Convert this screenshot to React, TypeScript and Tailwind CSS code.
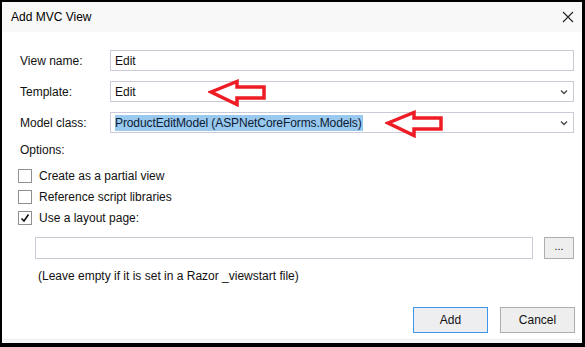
import React from "react";

const font = { fontFamily: '"Liberation Sans", Arial, sans-serif' };

function Arrow({ className }: { className: string }) {
  return (
    <svg className={className} width="60" height="28" viewBox="0 0 60 28">
      <polygon
        points="3,13 29,2.5 29,8 56,8 56,19 29,19 29,25.5"
        fill="none"
        stroke="#ee1c25"
        strokeWidth="3.5"
        strokeLinejoin="miter"
      />
    </svg>
  );
}

function Chevron() {
  return (
    <svg width="8" height="6" viewBox="0 0 8 6" className="shrink-0">
      <path d="M1 1.5 L4 4.5 L7 1.5" fill="none" stroke="#4a4a4a" strokeWidth="1.4" />
    </svg>
  );
}

function Checkbox({ checked }: { checked?: boolean }) {
  return (
    <div className="w-[14px] h-[14px] border border-[#8f8f8f] bg-white flex items-center justify-center shrink-0">
      {checked && (
        <svg width="10" height="10" viewBox="0 0 10 10">
          <path d="M1.5 5.5 L4 8 L8.5 1.5" fill="none" stroke="#111" strokeWidth="1.6" />
        </svg>
      )}
    </div>
  );
}

export default function App() {
  return (
    <div
      className="w-[585px] h-[347px] bg-black pt-[2px] pl-[2px] pr-[3px] pb-[4px] text-[12px] text-[#111111]"
      style={font}
    >
      <div className="w-full h-full bg-white flex flex-col">
        {/* Title bar */}
        <div className="h-[30px] bg-[#f8f8f8] flex items-center justify-between pl-[9px] pr-[5px] shrink-0">
          <span className="text-black text-[12px]">Add MVC View</span>
          <svg width="14" height="14" viewBox="0 0 14 14" className="mr-[2px]">
            <path d="M2 2 L12 12 M12 2 L2 12" stroke="#222" strokeWidth="1.1" />
          </svg>
        </div>

        {/* Body */}
        <div className="relative flex-1 flex flex-col pl-[18px] pr-[8px] pt-[18px]">
          {/* View name */}
          <div className="flex items-center h-[21px]">
            <div className="w-[90px] shrink-0">View name:</div>
            <div className="flex-1 h-[21px] border border-[#cacbd6] flex items-center pl-[4px]">Edit</div>
          </div>
          {/* Template */}
          <div className="flex items-center h-[21px] mt-[10px]">
            <div className="w-[90px] shrink-0">Template:</div>
            <div className="flex-1 h-[21px] border border-[#cacbd6] flex items-center justify-between pl-[4px] pr-[5px]">
              <span>Edit</span>
              <Chevron />
            </div>
          </div>
          {/* Model class */}
          <div className="flex items-center h-[21px] mt-[10px]">
            <div className="w-[90px] shrink-0">Model class:</div>
            <div className="flex-1 h-[21px] border border-[#cacbd6] flex items-center justify-between pl-[4px] pr-[5px]">
              <span className="bg-[#99c9ef] text-[#0b1a33] h-[16px] leading-[16px] pr-[1px] tracking-[-0.1px]">
                ProductEditModel (ASPNetCoreForms.Models)
              </span>
              <Chevron />
            </div>
          </div>

          {/* Options */}
          <div className="mt-[9px] leading-[16px]">Options:</div>
          <div className="flex flex-col gap-[7px] mt-[11px] -ml-[2px]">
            <div className="flex items-center gap-[7px] h-[14px]">
              <Checkbox />
              <span>Create as a partial view</span>
            </div>
            <div className="flex items-center gap-[7px] h-[14px]">
              <Checkbox />
              <span>Reference script libraries</span>
            </div>
            <div className="flex items-center gap-[7px] h-[14px]">
              <Checkbox checked />
              <span>Use a layout page:</span>
            </div>
          </div>

          {/* Layout input */}
          <div className="flex items-center mt-[12px] ml-[15px]">
            <div className="w-[498px] h-[22px] border border-[#cacbd6]" />
            <div className="ml-[11px] w-[30px] h-[22px] border border-[#adadad] bg-[#eeeeee] flex items-center justify-center text-[11px] pb-[3px]">
              ...
            </div>
          </div>
          <div className="mt-[9px] ml-[18px] leading-[16px]">
            (Leave empty if it is set in a Razor _viewstart file)
          </div>

          {/* Buttons */}
          <div className="flex justify-end gap-[12px] mt-[23px] -mr-[1px]">
            <div className="w-[75px] h-[26px] border border-[#3c98ea] bg-[#eeeef1] flex items-center justify-center text-[#111]">
              Add
            </div>
            <div className="w-[75px] h-[26px] border border-[#adadad] bg-[#eeeeee] flex items-center justify-center text-[#111]">
              Cancel
            </div>
          </div>

          <Arrow className="absolute left-[206px] top-[47px]" />
          <Arrow className="absolute left-[383px] top-[78px]" />
        </div>

        {/* bottom strip */}
        <div className="h-[4px] bg-[#f7f7f7] border-t border-[#efefef] shrink-0" />
      </div>
    </div>
  );
}
